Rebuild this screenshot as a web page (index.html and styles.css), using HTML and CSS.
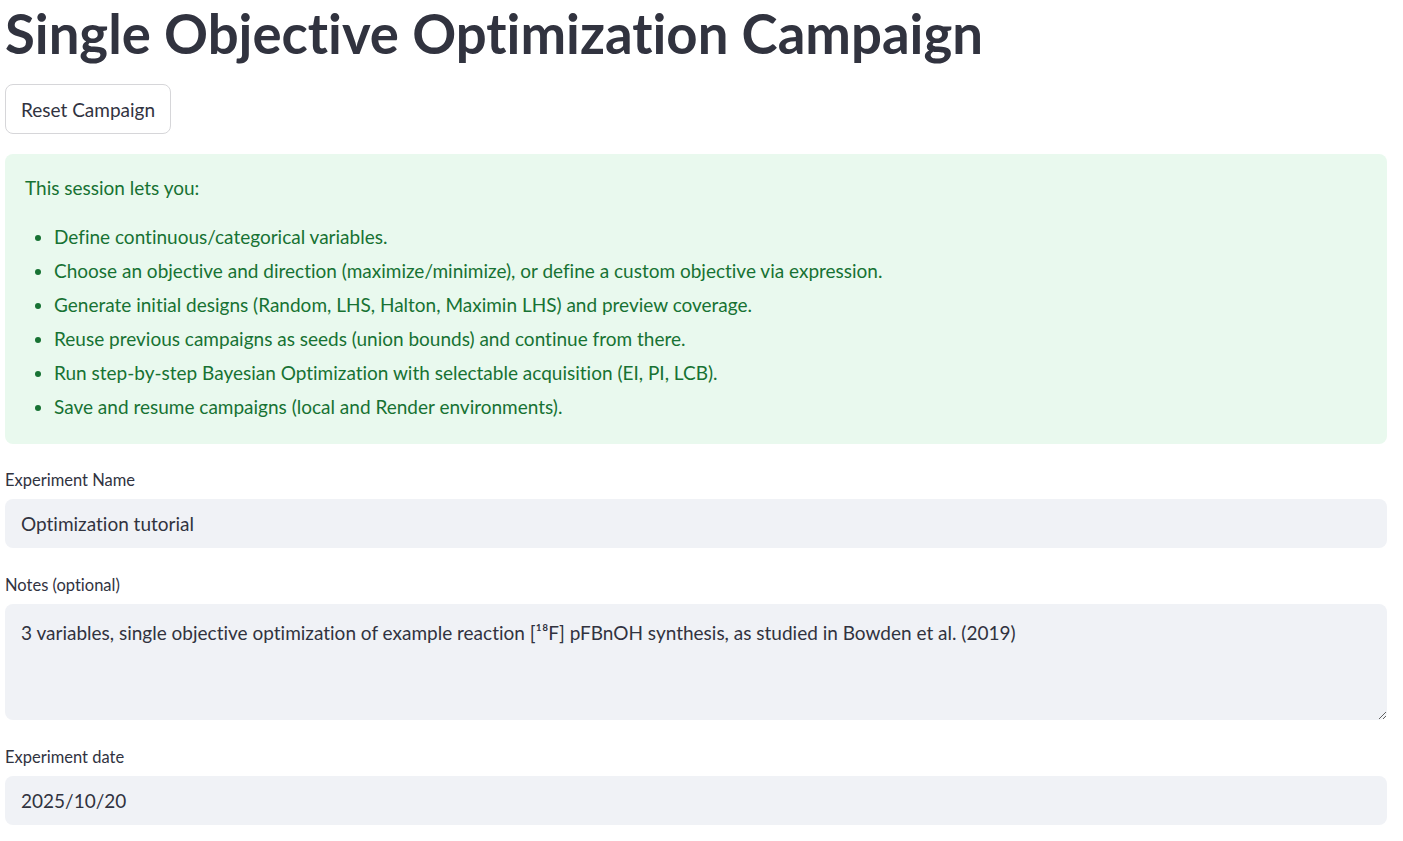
FILE: index.html
```html
<!DOCTYPE html>
<html lang="en">
<head>
<meta charset="utf-8">
<title>Single Objective Optimization Campaign</title>
<link rel="stylesheet" href="styles.css">
</head>
<body>
<main class="page">
  <h1 class="title">Single Objective Optimization Campaign</h1>
  <div class="btn-row"><button class="btn" type="button">Reset Campaign</button></div>
  <div class="alert">
    <p class="alert-lead">This session lets you:</p>
    <ul class="alert-list">
      <li>Define continuous/categorical variables.</li>
      <li>Choose an objective and direction (maximize/minimize), or define a custom objective via expression.</li>
      <li>Generate initial designs (Random, LHS, Halton, Maximin LHS) and preview coverage.</li>
      <li>Reuse previous campaigns as seeds (union bounds) and continue from there.</li>
      <li>Run step-by-step Bayesian Optimization with selectable acquisition (EI, PI, LCB).</li>
      <li>Save and resume campaigns (local and Render environments).</li>
    </ul>
  </div>
  <div class="field">
    <label class="label" for="exp-name">Experiment Name</label>
    <input class="input" id="exp-name" type="text" value="Optimization tutorial">
  </div>
  <div class="field">
    <label class="label" for="notes">Notes (optional)</label>
    <textarea class="input textarea" id="notes">3 variables, single objective optimization of example reaction [¹⁸F] pFBnOH synthesis, as studied in Bowden et al. (2019)</textarea>
  </div>
  <div class="field">
    <label class="label" for="exp-date">Experiment date</label>
    <input class="input" id="exp-date" type="text" value="2025/10/20">
  </div>
</main>
</body>
</html>
```

FILE: styles.css
```css
* { box-sizing: border-box; }
html, body { margin: 0; padding: 0; background: #ffffff; }
body {
  font-family: "Lato", "Liberation Sans", sans-serif;
  font-variant-ligatures: none;
  color: #31333f;
}
.page {
  width: 1382px;
  margin-left: 5px;
  display: flex;
  flex-direction: column;
}
.title {
  margin: 0;
  font-size: 54.5px;
  line-height: 66px;
  font-weight: 700;
  color: #31333f;
  font-variant-ligatures: none;
}
.btn-row { margin-top: 18px; display: flex; }
.btn {
  height: 50px;
  width: 166px;
  padding: 0;
  background: #ffffff;
  border: 1px solid #d6d6d9;
  border-radius: 8px;
  font-family: inherit;
  font-variant-ligatures: none;
  font-size: 19px;
  color: #31333f;
}
.alert {
  margin-top: 20px;
  background: #e9f9ee;
  border-radius: 8px;
  padding: 18px 20px 21px 20px;
  color: #177233;
  font-size: 19px;
}
.alert-lead { margin: 0 0 17px; line-height: 32px; }
.alert-list { margin: 0; padding-left: 29px; }
.alert-list li { line-height: 32px; margin-bottom: 2px; }
.alert-list li:last-child { margin-bottom: 0; }
.field { display: flex; flex-direction: column; margin-top: 26px; }
.field + .field { margin-top: 27px; }
.label {
  font-size: 16.5px;
  line-height: 20px;
  margin-bottom: 9px;
  color: #31333f;
}
.input {
  height: 49px;
  width: 100%;
  border: none;
  border-radius: 8px;
  background: #f0f2f6;
  padding: 0 16px;
  font-family: inherit;
  font-variant-ligatures: none;
  font-size: 19px;
  color: #31333f;
  outline: none;
}
.textarea {
  height: 116px;
  padding: 15px 16px;
  line-height: 28px;
  resize: vertical;
}
```
